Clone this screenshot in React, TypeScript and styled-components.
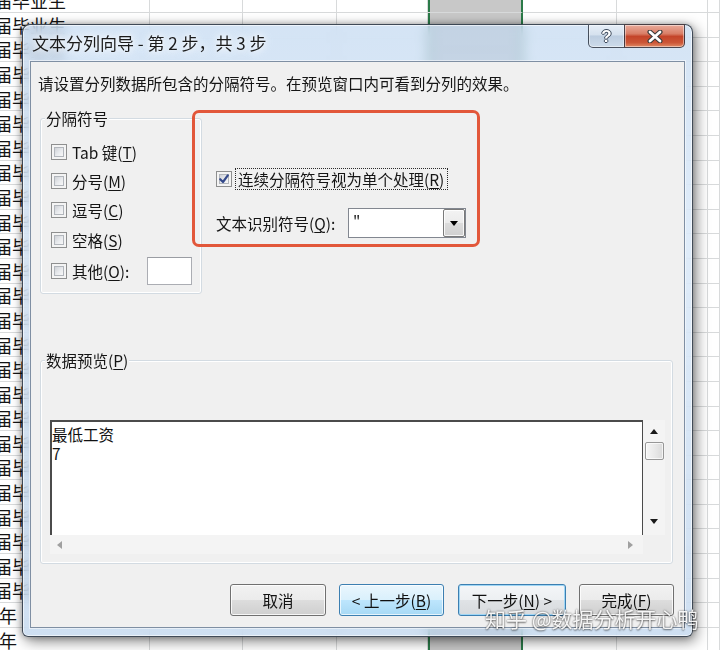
import React from "react";
import styled, { createGlobalStyle } from "styled-components";

const FONT = `"Noto Sans CJK SC", "Noto Sans", "Liberation Sans", sans-serif`;

const GlobalStyle = createGlobalStyle`
  * { box-sizing: border-box; }
  html, body { margin: 0; padding: 0; background: #ffffff; }
  body { font-family: ${FONT}; overflow: hidden; }
`;

const Stage = styled.div`
  position: relative;
  width: 720px;
  height: 650px;
  overflow: hidden;
  background: #fff;
`;

/* ---------- spreadsheet behind the dialog ---------- */

const Sheet = styled.div`
  display: grid;
  grid-template-columns: 150px 93px 94px 91px 95px 94px 91px 12px;
  grid-auto-rows: 24.6px;
  margin-top: -11.6px;
`;

const Cell = styled.div<{ $sel?: boolean }>`
  display: flex;
  align-items: center;
  overflow: hidden;
  white-space: nowrap;
  border-right: 1px solid #d8dadb;
  border-bottom: 1px solid #d8dadb;
  background: ${(p) => (p.$sel ? "#c8c8c8" : "#ffffff")};
  ${(p) => (p.$sel ? "border-right: 2px solid #2b7a48; box-shadow: inset 2px 0 0 #2b7a48;" : "")}
  font: 18px/1 ${FONT};
  color: #141414;
`;

const CellText = styled.span<{ $indent: number }>`
  margin-left: ${(p) => p.$indent}px;
`;

/* ---------- window frame ---------- */

const Window = styled.div`
  position: absolute;
  left: 22px;
  top: 24px;
  width: 671px;
  height: 613px;
  display: flex;
  flex-direction: column;
  padding: 0 7px 8px;
  border: 1px solid rgba(28, 36, 48, 0.8);
  border-radius: 8px 8px 6px 6px;
  background: linear-gradient(
    180deg,
    rgba(192, 215, 240, 0.68) 0%,
    rgba(208, 227, 247, 0.68) 35%,
    rgba(188, 211, 236, 0.72) 100%
  );
  backdrop-filter: blur(6px);
  box-shadow: 3px 4px 14px rgba(0, 0, 0, 0.5), -1px 0 6px rgba(0, 0, 0, 0.25),
    inset 0 0 0 1px rgba(255, 255, 255, 0.6);
`;

const TitleBar = styled.div`
  flex: none;
  height: 36px;
  display: flex;
  align-items: flex-start;
`;

const Title = styled.div`
  margin: 8px 0 0 2px;
  font: 17px/20px ${FONT};
  color: #1b1b1b;
  white-space: nowrap;
  text-shadow: 0 0 6px #fff, 0 0 10px rgba(255, 255, 255, 0.9);
`;

const CaptionButtons = styled.div`
  margin-left: auto;
  margin-top: -1px;
  display: flex;
`;

const CaptionButton = styled.div<{ $kind: "help" | "close" }>`
  height: 24px;
  width: ${(p) => (p.$kind === "help" ? 36 : 61)}px;
  display: flex;
  align-items: center;
  justify-content: center;
  border: 1px solid rgba(40, 48, 62, 0.82);
  box-shadow: inset 0 0 0 1px rgba(255, 255, 255, 0.45);
  ${(p) =>
    p.$kind === "help"
      ? `border-radius: 0 0 0 5px; border-right: none;
         background: linear-gradient(180deg, #e6eef7 0%, #d5e1ee 45%, #bccde0 50%, #cddbea 100%);`
      : `border-radius: 0 0 5px 0;
         background: linear-gradient(180deg, #eaab9b 0%, #d97d66 40%, #c4442a 52%, #cc5637 80%, #e08a66 100%);`}
`;

const HelpGlyph = styled.span`
  font: bold 17px/1 "Liberation Sans", sans-serif;
  color: #ffffff;
  text-shadow: 1px 0 0 #3d4a5c, -1px 0 0 #3d4a5c, 0 1px 0 #3d4a5c, 0 -1px 0 #3d4a5c;
`;

/* ---------- client area ---------- */

const Client = styled.div`
  flex: 1;
  position: relative;
  display: flex;
  flex-direction: column;
  background: #f0f0f0;
  border: 1px solid #7f8fa3;
  box-shadow: 0 0 0 1px rgba(255, 255, 255, 0.5);
  font: 15.5px/20px ${FONT};
  color: #151515;
`;

const Instruction = styled.div`
  margin: 12px 0 0 7px;
  line-height: 18px;
  white-space: nowrap;
`;

const OptionsRow = styled.div`
  margin-top: 18px;
  display: flex;
  align-items: flex-start;
`;

const GroupBox = styled.div<{ $w: number; $h: number; $top: number }>`
  position: relative;
  flex: none;
  width: ${(p) => p.$w}px;
  height: ${(p) => p.$h}px;
  margin: ${(p) => p.$top}px 0 0 9px;
  border: 1px solid #d3dbe2;
  border-radius: 3px;
  box-shadow: inset 0 0 0 1px #ffffff;
`;

const GroupLegend = styled.div`
  position: absolute;
  top: -10px;
  left: 4px;
  padding: 0 1px;
  background: #f0f0f0;
  line-height: 18px;
  white-space: nowrap;
`;

const SepList = styled.div`
  display: flex;
  flex-direction: column;
  padding: 18px 9px 0 10px;
`;

const OptRow = styled.div<{ $extra?: number }>`
  height: 29px;
  margin-top: ${(p) => p.$extra ?? 0}px;
  display: flex;
  align-items: center;
  white-space: nowrap;
`;

const Box = styled.span`
  flex: none;
  position: relative;
  width: 16px;
  height: 16px;
  margin-right: 5px;
  padding: 2px;
  display: flex;
  border: 1px solid #8e8f8f;
  background: #f4f4f4;
`;

const BoxInner = styled.span`
  flex: 1;
  display: flex;
  border: 1px solid #b2b6bc;
  background: linear-gradient(135deg, #cfd2d7 0%, #e9ebee 55%, #f8f8f8 100%);
`;

const CheckSvg = styled.svg`
  position: absolute;
  left: 1px;
  top: 1px;
`;

const Key = styled.span`
  text-decoration: underline;
  text-underline-offset: 2px;
  text-decoration-thickness: 1px;
`;

const OtherInput = styled.div`
  width: 45px;
  height: 28px;
  margin-left: auto;
  background: #fff;
  border: 1px solid #abadb3;
  border-top-color: #9a9da3;
`;

const MidColumn = styled.div`
  margin: 58px 0 0 14px;
  display: flex;
  flex-direction: column;
`;

const CheckRow = styled.div`
  height: 22px;
  display: flex;
  align-items: center;
  white-space: nowrap;
`;

const FocusLabel = styled.span`
  margin-left: -2px;
  padding: 0 3px 0 2px;
  line-height: 20px;
  border: 1px dotted #2a2a2a;
`;

const QualRow = styled.div`
  margin-top: 18px;
  height: 30px;
  display: flex;
  align-items: center;
  white-space: nowrap;
`;

const QualLabel = styled.span`
  width: 132px;
`;

const Combo = styled.div`
  width: 118px;
  height: 30px;
  display: flex;
  background: #fff;
  border: 1px solid #828790;
`;

const ComboValue = styled.div`
  flex: 1;
  padding: 1px 0 0 4px;
  line-height: 20px;
`;

const ComboButton = styled.div`
  width: 22px;
  display: flex;
  align-items: center;
  justify-content: center;
  border: 1px solid #7a7a7a;
  border-radius: 2px;
  background: linear-gradient(180deg, #f3f3f3 0%, #ebebeb 50%, #dcdcdc 50%, #d0d0d0 100%);
  box-shadow: inset 0 0 0 1px rgba(255, 255, 255, 0.8);
`;

const Annotation = styled.div`
  position: absolute;
  left: 161px;
  top: 48px;
  width: 288px;
  height: 137px;
  border: 3px solid #e2573a;
  border-radius: 7px;
  pointer-events: none;
`;

/* ---------- preview ---------- */

const PreviewInner = styled.div`
  padding: 59px 0 0 9px;
`;

const PreviewBox = styled.div`
  width: 615px;
  height: 134px;
  display: grid;
  grid-template-columns: 1fr 22px;
  grid-template-rows: 1fr 19px;
`;

const PreviewText = styled.div`
  background: #fff;
  border-top: 2px solid #4b4b4b;
  border-left: 2px solid #4b4b4b;
  border-right: 1px solid #4b4b4b;
  padding-top: 3px;
  line-height: 19px;
  color: #111;
`;

const VScroll = styled.div`
  display: flex;
  flex-direction: column;
  align-items: center;
  padding: 9px 0 11px;
  background: #f4f4f4;
`;

const Thumb = styled.div`
  width: 19px;
  height: 18px;
  margin-top: 8px;
  border: 1px solid #979797;
  border-radius: 2px;
  background: linear-gradient(90deg, #f6f6f6 0%, #e9e9e9 50%, #dadada 100%);
  box-shadow: inset 0 0 0 1px rgba(255, 255, 255, 0.7);
`;

const Spacer = styled.div`
  flex: 1;
`;

const HScroll = styled.div`
  display: flex;
  align-items: center;
  padding: 0 10px 0 7px;
  background: #f4f4f4;
`;

const Corner = styled.div`
  background: #f0f0f0;
`;

/* ---------- buttons ---------- */

const ButtonRow = styled.div`
  margin-top: 20px;
  padding-right: 10px;
  display: flex;
  justify-content: flex-end;
  gap: 13px;
`;

const Btn = styled.div<{ $w: number; $variant?: "hover" | "default"; $gapAfter?: number }>`
  width: ${(p) => p.$w}px;
  height: 32px;
  margin-right: ${(p) => p.$gapAfter ?? 0}px;
  display: flex;
  align-items: center;
  justify-content: center;
  border-radius: 3px;
  white-space: nowrap;
  color: #111;
  ${(p) =>
    p.$variant === "hover"
      ? `border: 1px solid #3c7fb1;
         background: linear-gradient(180deg, #eaf6fd 0%, #d9f0fc 50%, #bee6fd 50%, #a7d9f5 100%);
         box-shadow: inset 0 0 0 1px rgba(255,255,255,0.7);`
      : p.$variant === "default"
      ? `border: 1px solid #3c7fb1;
         background: linear-gradient(180deg, #f4f6f8 0%, #eceff2 50%, #e0e3e6 50%, #d7dadd 100%);
         box-shadow: inset 0 0 0 1px #9fd6f5;`
      : `border: 1px solid #707070;
         background: linear-gradient(180deg, #f2f2f2 0%, #ebebeb 50%, #dddddd 50%, #cfcfcf 100%);
         box-shadow: inset 0 0 0 1px rgba(255,255,255,0.8);`}
`;

const Watermark = styled.div`
  position: absolute;
  left: 485px;
  top: 606px;
  font: 21px/24px ${FONT};
  color: rgba(255, 255, 255, 0.93);
  white-space: nowrap;
  text-shadow: 0 0 2px rgba(0, 0, 0, 0.6), 0 1px 2px rgba(0, 0, 0, 0.45);
`;

/* ---------- pieces ---------- */

const Tri = ({ dir, color }: { dir: "up" | "down" | "left" | "right"; color: string }) => {
  const pts =
    dir === "up"
      ? "0,5 4,0 8,5"
      : dir === "down"
      ? "0,0 8,0 4,5"
      : dir === "left"
      ? "5,0 5,8 0,4"
      : "0,0 0,8 5,4";
  const w = dir === "up" || dir === "down" ? 8 : 5;
  const h = dir === "up" || dir === "down" ? 5 : 8;
  return (
    <svg width={w} height={h} viewBox={`0 0 ${w} ${h}`}>
      <polygon points={pts} fill={color} />
    </svg>
  );
};

const Check = ({ checked }: { checked?: boolean }) => (
  <Box>
    <BoxInner />
    {checked && (
      <CheckSvg width="12" height="12" viewBox="0 0 12 12">
        <path d="M2.2 6.2 L5 9 L9.8 2.4" fill="none" stroke="#34498a" strokeWidth="2.2" strokeLinecap="round" strokeLinejoin="round" />
      </CheckSvg>
    )}
  </Box>
);

const CloseX = () => (
  <svg width="16" height="13" viewBox="0 0 16 13">
    <path d="M3 2 L13 11 M13 2 L3 11" stroke="#3b3b3b" strokeWidth="5" strokeLinecap="round" />
    <path d="M3 2 L13 11 M13 2 L3 11" stroke="#ffffff" strokeWidth="2.8" strokeLinecap="round" />
  </svg>
);

export default function App() {
  const cells: React.ReactNode[] = [];
  for (let r = 0; r < 27; r++) {
    for (let c = 0; c < 8; c++) {
      let text = "";
      if (c === 0) text = r <= 24 ? "届毕业生" : "年";
      cells.push(
        <Cell key={`${r}-${c}`} $sel={c === 4}>
          {text && <CellText $indent={r <= 24 ? -6 : -1}>{text}</CellText>}
        </Cell>
      );
    }
  }

  return (
    <Stage>
      <GlobalStyle />
      <Sheet>{cells}</Sheet>

      <Window>
        <TitleBar>
          <Title>文本分列向导 - 第 2 步，共 3 步</Title>
          <CaptionButtons>
            <CaptionButton $kind="help">
              <HelpGlyph>?</HelpGlyph>
            </CaptionButton>
            <CaptionButton $kind="close">
              <CloseX />
            </CaptionButton>
          </CaptionButtons>
        </TitleBar>

        <Client>
          <Instruction>请设置分列数据所包含的分隔符号。在预览窗口内可看到分列的效果。</Instruction>

          <OptionsRow>
            <GroupBox $w={162} $h={176} $top={8}>
              <GroupLegend>分隔符号</GroupLegend>
              <SepList>
                <OptRow>
                  <Check />
                  Tab 键(<Key>T</Key>)
                </OptRow>
                <OptRow>
                  <Check />
                  分号(<Key>M</Key>)
                </OptRow>
                <OptRow>
                  <Check />
                  逗号(<Key>C</Key>)
                </OptRow>
                <OptRow $extra={1}>
                  <Check />
                  空格(<Key>S</Key>)
                </OptRow>
                <OptRow $extra={2}>
                  <Check />
                  其他(<Key>O</Key>):
                  <OtherInput />
                </OptRow>
              </SepList>
            </GroupBox>

            <MidColumn>
              <CheckRow>
                <Check checked />
                <FocusLabel>
                  连续分隔符号视为单个处理(<Key>R</Key>)
                </FocusLabel>
              </CheckRow>
              <QualRow>
                <QualLabel>
                  文本识别符号(<Key>Q</Key>):
                </QualLabel>
                <Combo>
                  <ComboValue>"</ComboValue>
                  <ComboButton>
                    <Tri dir="down" color="#000" />
                  </ComboButton>
                </Combo>
              </QualRow>
            </MidColumn>
          </OptionsRow>

          <GroupBox $w={633} $h={204} $top={66}>
            <GroupLegend>
              数据预览(<Key>P</Key>)
            </GroupLegend>
            <PreviewInner>
              <PreviewBox>
                <PreviewText>
                  最低工资
                  <br />7
                </PreviewText>
                <VScroll>
                  <Tri dir="up" color="#1a1a1a" />
                  <Thumb />
                  <Spacer />
                  <Tri dir="down" color="#1a1a1a" />
                </VScroll>
                <HScroll>
                  <Tri dir="left" color="#a0a0a0" />
                  <Spacer />
                  <Tri dir="right" color="#a0a0a0" />
                </HScroll>
                <Corner />
              </PreviewBox>
            </PreviewInner>
          </GroupBox>

          <ButtonRow>
            <Btn $w={96}>取消</Btn>
            <Btn $w={105} $variant="hover" $gapAfter={1}>
              &lt; 上一步(<Key>B</Key>)
            </Btn>
            <Btn $w={108} $variant="default">
              下一步(<Key>N</Key>) &gt;
            </Btn>
            <Btn $w={95}>
              完成(<Key>F</Key>)
            </Btn>
          </ButtonRow>

          <Annotation />
        </Client>
      </Window>

      <Watermark>知乎 @数据分析开心鸭</Watermark>
    </Stage>
  );
}
